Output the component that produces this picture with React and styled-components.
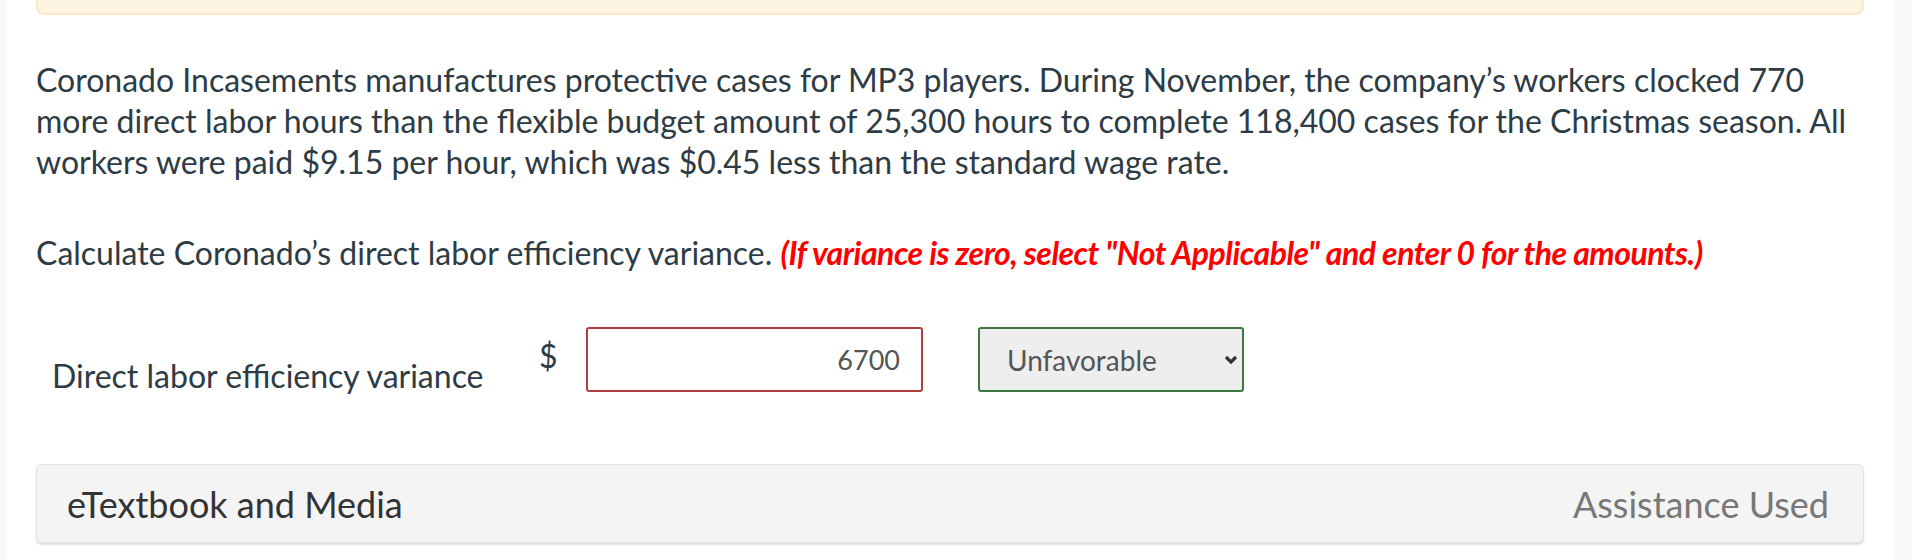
import React from 'react';
import styled, { createGlobalStyle } from 'styled-components';

const GlobalStyle = createGlobalStyle`
  body {
    margin: 0;
    background: #ffffff;
    font-family: Lato, "Open Sans", sans-serif;
  }
`;

const Page = styled.div`
  display: flex;
  height: 560px;
  overflow: hidden;
`;

const Gutter = styled.div`
  width: ${props => props.width}px;
  flex-shrink: 0;
  background-color: #f8f8f8;
`;

const Main = styled.main`
  flex: 1;
  padding: 0 30px;
  color: #2d3b45;
`;

const Notice = styled.div`
  height: 30px;
  margin-top: -19px;
  background-color: #fdf5e2;
  border: 2px solid #fbe9c8;
  border-radius: 8px;
`;

const Question = styled.p`
  margin: ${props => props.gap}px 4px 0 0;
  font-size: 32px;
  line-height: 41px;
`;

const Emphasis = styled.span`
  color: #ff0000;
  font-weight: 700;
  font-style: italic;
  letter-spacing: -0.5px;
`;

const AnswerRow = styled.div`
  display: flex;
  align-items: flex-start;
  margin-top: 54px;
`;

const Label = styled.div`
  width: 487px;
  padding: 28px 0 0 16px;
  font-size: 32px;
  line-height: 41px;
`;

const Currency = styled.span`
  width: 47px;
  padding-top: 8px;
  font-size: 32px;
  line-height: 41px;
`;

const AmountInput = styled.input`
  box-sizing: border-box;
  width: 337px;
  height: 65px;
  padding: 0 21px;
  border: 2px solid #ad403c;
  border-radius: 3px;
  background: #ffffff;
  color: #555555;
  font-family: Lato, sans-serif;
  font-size: 27px;
  text-align: right;
  outline: none;
`;

const SelectBox = styled.div`
  box-sizing: border-box;
  display: flex;
  align-items: center;
  justify-content: space-between;
  width: 266px;
  height: 65px;
  margin-left: 55px;
  padding: 0 4px 0 27px;
  border: 2px solid #3e7640;
  border-radius: 3px;
  background-color: #eeeeee;
  color: #555555;
  font-size: 28px;
`;

const Panel = styled.div`
  display: flex;
  align-items: center;
  justify-content: space-between;
  height: 79px;
  margin-top: 68px;
  padding: 0 34px 0 30px;
  box-sizing: border-box;
  background-color: #f4f4f4;
  border: 1px solid #e2e2e2;
  border-radius: 6px;
  box-shadow: 0 2px 2px rgba(0, 0, 0, 0.12);
  font-size: 36px;
`;

const PanelTitle = styled.span`
  color: #333333;
`;

const PanelStatus = styled.span`
  color: #777777;
`;

const Chevron = () => (
  <svg width="14" height="12" viewBox="0 0 14 12" aria-hidden="true">
    <path d="M2 3 L7 8 L12 3" fill="none" stroke="#333" strokeWidth="3.2" />
  </svg>
);

const App = () => (
  <>
    <GlobalStyle />
    <Page>
      <Gutter width={6} />
      <Main>
        <Notice />
        <Question gap={44}>
          Coronado Incasements manufactures protective cases for MP3 players. During November, the
          company’s workers clocked 770 more direct labor hours than the flexible budget amount of
          25,300 hours to complete 118,400 cases for the Christmas season. All workers were paid
          $9.15 per hour, which was $0.45 less than the standard wage rate.
        </Question>
        <Question gap={50}>
          Calculate Coronado’s direct labor efficiency variance.{' '}
          <Emphasis>(If variance is zero, select "Not Applicable" and enter 0 for the amounts.)</Emphasis>
        </Question>
        <AnswerRow>
          <Label>Direct labor efficiency variance</Label>
          <Currency>$</Currency>
          <AmountInput defaultValue="6700" />
          <SelectBox>
            <span>Unfavorable</span>
            <Chevron />
          </SelectBox>
        </AnswerRow>
        <Panel>
          <PanelTitle>eTextbook and Media</PanelTitle>
          <PanelStatus>Assistance Used</PanelStatus>
        </Panel>
      </Main>
      <Gutter width={18} />
    </Page>
  </>
);

export default App;
